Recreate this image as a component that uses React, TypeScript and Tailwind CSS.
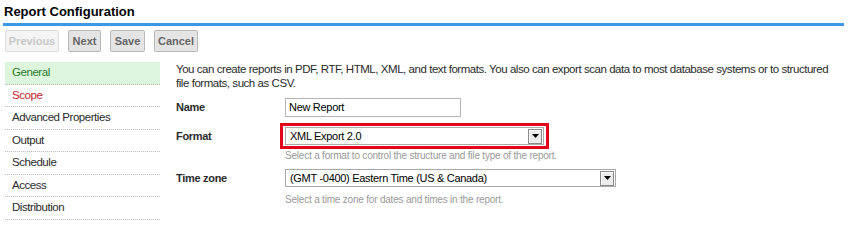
import React from 'react';

const navItems = ['General', 'Scope', 'Advanced Properties', 'Output', 'Schedule', 'Access', 'Distribution'];

function Caret() {
  return (
    <span className="flex h-[15px] w-[14px] items-center justify-center border border-[#8a8a8a] bg-[#ebebeb] shadow-[inset_1px_1px_0_#fff]">
      <svg width="7" height="4" viewBox="0 0 7 4">
        <polygon points="0,0 7,0 3.5,4" fill="#000" />
      </svg>
    </span>
  );
}

function Select({ value, width }: { value: string; width: string }) {
  return (
    <div className={`flex h-[18px] items-center justify-between border border-[#a9a9a9] bg-white pl-[4px] pr-[1px] ${width}`}>
      <span className="text-black">{value}</span>
      <Caret />
    </div>
  );
}

export default function App() {
  return (
    <div className="h-[227px] w-[849px] bg-white pt-[4px] font-['Liberation_Sans',Arial,sans-serif] text-[11px] tracking-[-0.3px] text-[#2b2b2b]">
      <div className="mx-[3px] w-[841px] border-b-[3px] border-[#3d97e6] pb-[4px] pl-[1px] text-[13px] font-bold leading-[15px] tracking-normal text-black">
        Report Configuration
      </div>

      {/* toolbar */}
      <div className="ml-[5px] mt-[4px] flex gap-[9px] tracking-normal">
        <button type="button" className="h-[22px] w-[54px] rounded-[2px] border border-[#dcdcdc] bg-[#f4f4f4] text-[11px] font-bold text-[#c8c8c8]">
          Previous
        </button>
        <button type="button" className="h-[22px] w-[33px] rounded-[2px] border border-[#b8b8b8] bg-[#e4e4e4] text-[11px] font-bold text-[#666]">
          Next
        </button>
        <button type="button" className="h-[22px] w-[35px] rounded-[2px] border border-[#b8b8b8] bg-[#e4e4e4] text-[11px] font-bold text-[#666]">
          Save
        </button>
        <button type="button" className="h-[22px] w-[44px] rounded-[2px] border border-[#b8b8b8] bg-[#e4e4e4] text-[11px] font-bold text-[#666]">
          Cancel
        </button>
      </div>

      <div className="mt-[10px] flex">
        {/* left nav */}
        <div className="ml-[5px] w-[155px] text-[11.5px] tracking-[-0.45px]">
          {navItems.map((item, i) => (
            <div
              key={item}
              className={`flex h-[22.5px] items-center border-b border-dotted border-[#bbb] pl-[7px] ${
                i === 0 ? 'bg-[#ddf5dd] text-[#2a7a2a]' : i === 1 ? 'text-[#c0272d]' : 'text-[#2b2b2b]'
              }`}
            >
              {item}
            </div>
          ))}
        </div>

        {/* main */}
        <div className="ml-[16px] w-[660px]">
          <p className="text-[11.5px] leading-[14px] tracking-[-0.45px] text-[#2b2b2b]">
            You can create reports in PDF, RTF, HTML, XML, and text formats. You also can export scan data to most database systems or to structured file formats, such as CSV.
          </p>

          <div className="mt-[8px] flex items-center">
            <span className="w-[109px] font-bold">Name</span>
            <div className="flex h-[19px] w-[176px] items-center border border-[#b5b5b5] bg-white px-[3px] text-black">
              New Report
            </div>
          </div>

          <div className="mt-[6px] flex items-center">
            <span className="w-[104px] font-bold">Format</span>
            <div className="w-[269px] border-[3px] border-[#e3001b] px-[2px] py-[1px]">
              <Select value="XML Export 2.0" width="w-[259px]" />
            </div>
          </div>
          <div className="ml-[109px] mt-[1px] text-[10px] leading-[12px] tracking-[-0.2px] text-[#999]">
            Select a format to control the structure and file type of the report.
          </div>

          <div className="mt-[7px] flex items-center">
            <span className="w-[109px] font-bold">Time zone</span>
            <Select value="(GMT -0400) Eastern Time (US & Canada)" width="w-[331px]" />
          </div>
          <div className="ml-[109px] mt-[7px] text-[10px] leading-[12px] tracking-[-0.2px] text-[#999]">
            Select a time zone for dates and times in the report.
          </div>
        </div>
      </div>
    </div>
  );
}
